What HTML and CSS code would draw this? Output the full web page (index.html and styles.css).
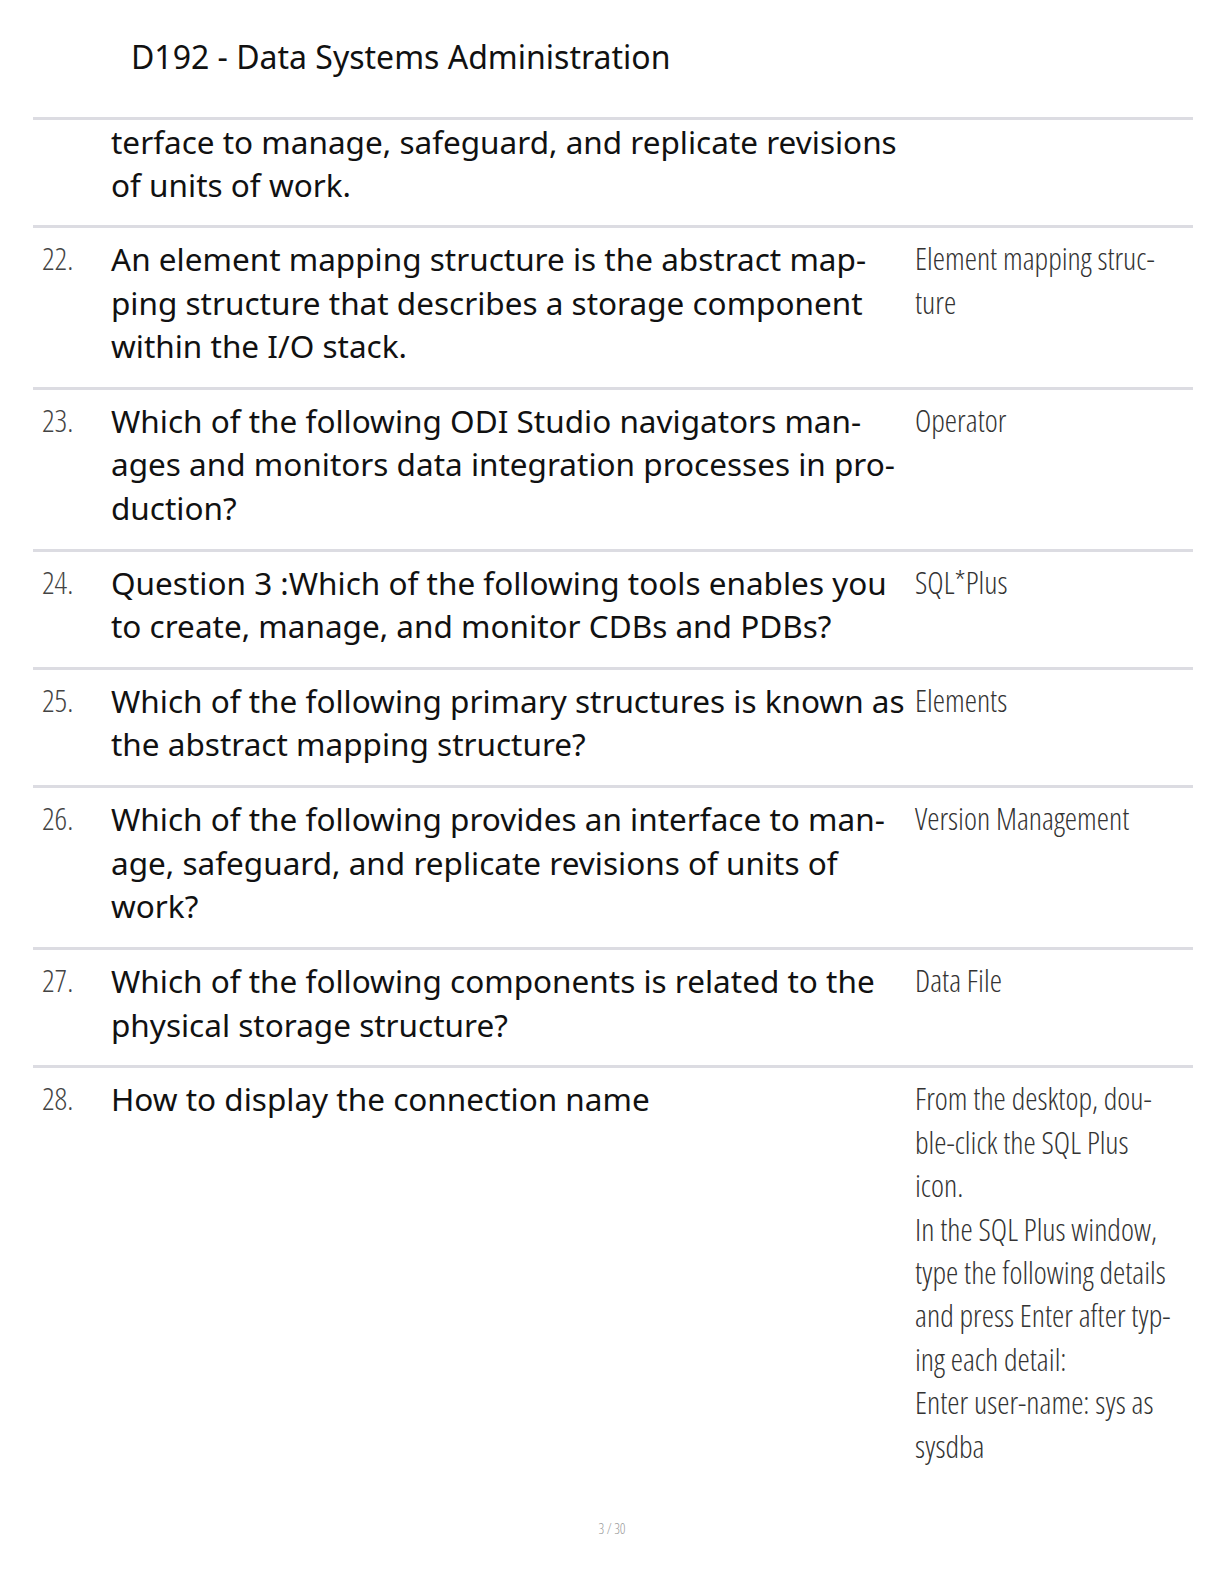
FILE: index.html
```html
<!DOCTYPE html>
<html lang="en">
<head>
<meta charset="utf-8">
<title>D192 - Data Systems Administration</title>
<link rel="stylesheet" href="styles.css">
</head>
<body>
<div class="page">
  <header class="title">D192 - Data Systems Administration</header>
  <section class="table">
    <div class="row first">
      <div class="num"></div>
      <div class="q"><span>terface to manage, safeguard, and replicate revisions</span><span>of units of work.</span></div>
      <div class="a"></div>
    </div>
    <div class="row">
      <div class="num">22.</div>
      <div class="q"><span>An element mapping structure is the abstract map-</span><span>ping structure that describes a storage component</span><span>within the I/O stack.</span></div>
      <div class="a"><span>Element mapping struc-</span><span>ture</span></div>
    </div>
    <div class="row">
      <div class="num">23.</div>
      <div class="q"><span>Which of the following ODI Studio navigators man-</span><span>ages and monitors data integration processes in pro-</span><span>duction?</span></div>
      <div class="a"><span>Operator</span></div>
    </div>
    <div class="row">
      <div class="num">24.</div>
      <div class="q"><span>Question 3 :Which of the following tools enables you</span><span>to create, manage, and monitor CDBs and PDBs?</span></div>
      <div class="a"><span>SQL*Plus</span></div>
    </div>
    <div class="row">
      <div class="num">25.</div>
      <div class="q"><span>Which of the following primary structures is known as</span><span>the abstract mapping structure?</span></div>
      <div class="a"><span>Elements</span></div>
    </div>
    <div class="row">
      <div class="num">26.</div>
      <div class="q"><span>Which of the following provides an interface to man-</span><span>age, safeguard, and replicate revisions of units of</span><span>work?</span></div>
      <div class="a"><span>Version Management</span></div>
    </div>
    <div class="row">
      <div class="num">27.</div>
      <div class="q"><span>Which of the following components is related to the</span><span>physical storage structure?</span></div>
      <div class="a"><span>Data File</span></div>
    </div>
    <div class="row last">
      <div class="num">28.</div>
      <div class="q"><span>How to display the connection name</span></div>
      <div class="a"><span>From the desktop, dou-</span><span>ble-click the SQL Plus</span><span>icon.</span><span>In the SQL Plus window,</span><span>type the following details</span><span>and press Enter after typ-</span><span>ing each detail:</span><span>Enter user-name: sys as</span><span>sysdba</span></div>
    </div>
  </section>
  <footer class="pager">3 / 30</footer>
</div>
</body>
</html>
```

FILE: styles.css
```css
html, body {
  margin: 0;
  padding: 0;
  background: #ffffff;
}

.page {
  width: 1224px;
  height: 1584px;
  position: relative;
  box-sizing: border-box;
  padding: 0 31px 0 33px;
  font-family: "Noto Sans", "Open Sans", sans-serif;
  color: #111111;
}

.title {
  padding: 35px 0 0 98px;
  height: 117px;
  box-sizing: border-box;
  font-size: 32px;
  line-height: 44px;
  color: #111111;
}

.table {
  display: flex;
  flex-direction: column;
}

.row {
  display: grid;
  grid-template-columns: 69px 804px 1fr;
  border-top: 3px solid #dcdce2;
  padding: 9px 0 19.5px 9px;
}

.row.first {
  padding-top: 0;
  padding-bottom: 18.5px;
}

.row.last {
  padding-bottom: 0;
}

.num,
.a {
  font-family: "Open Sans", "Noto Sans", sans-serif;
  font-stretch: 75%;
  font-weight: 300;
  font-size: 31px;
  line-height: 43.4px;
  color: #333333;
}

.num {
  color: #444444;
}

.q {
  font-size: 31.5px;
  line-height: 43.4px;
  color: #111111;
}

.q span,
.a span {
  display: block;
  white-space: nowrap;
}

.pager {
  position: absolute;
  left: 0;
  right: 0;
  top: 1519px;
  text-align: center;
  font-family: "Open Sans", sans-serif;
  font-stretch: 75%;
  font-weight: 300;
  font-size: 14px;
  color: #999999;
}
```
